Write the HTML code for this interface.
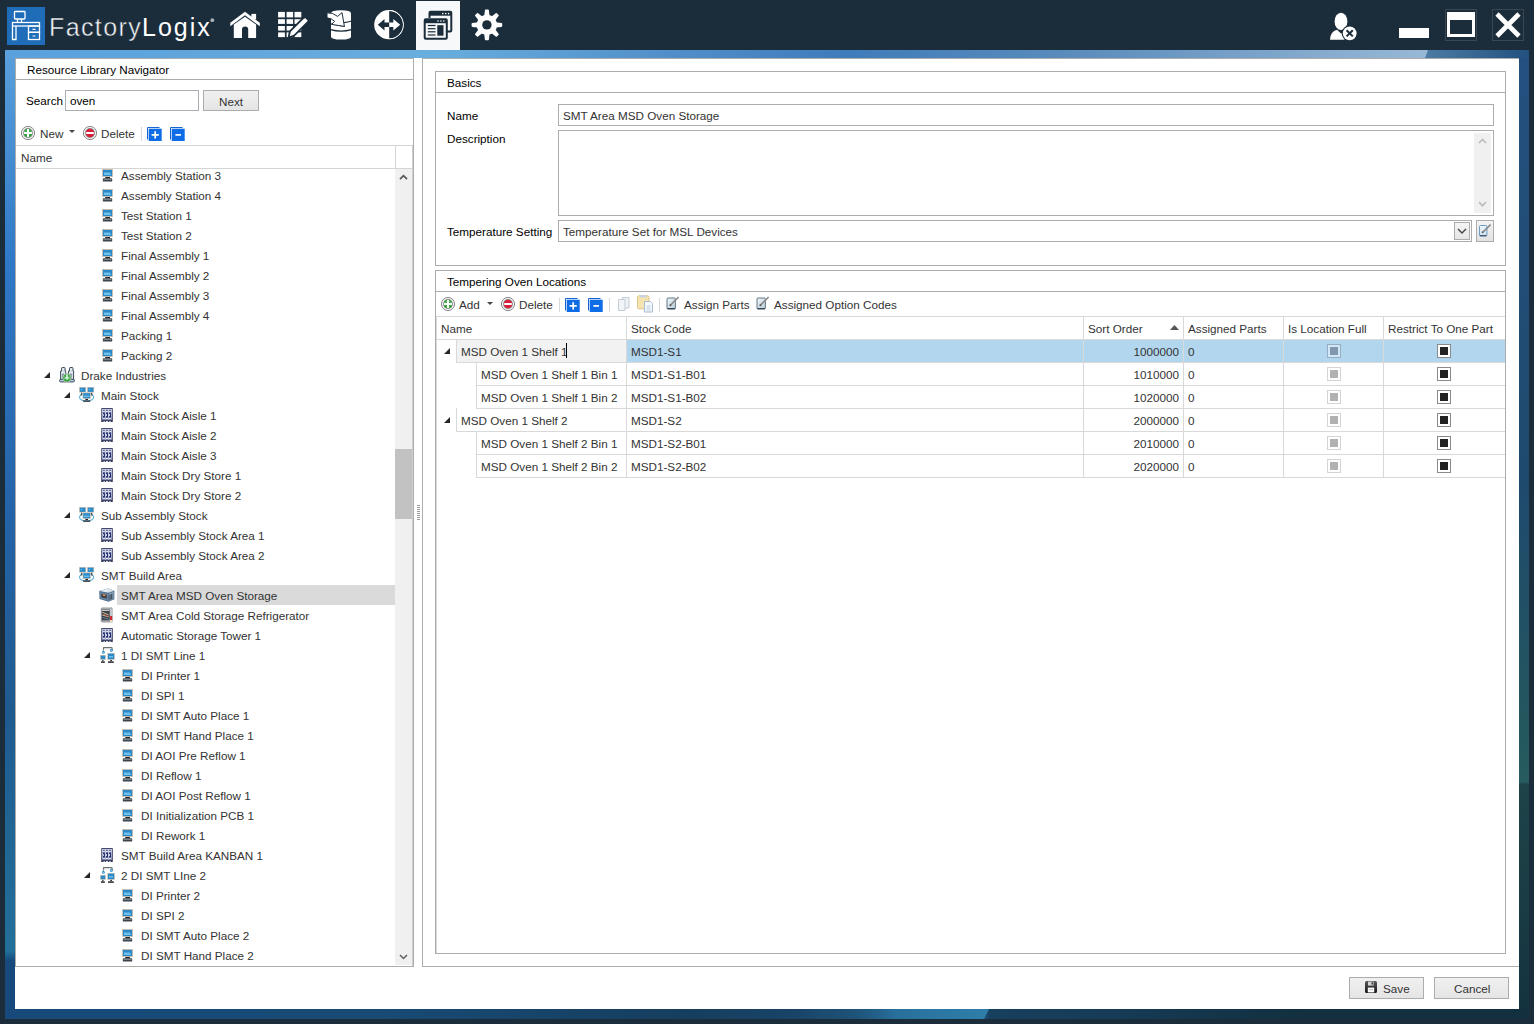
<!DOCTYPE html><html><head><meta charset="utf-8"><style>
*{margin:0;padding:0;box-sizing:border-box}
html,body{width:1534px;height:1024px;overflow:hidden;background:#1b2d3b;font-family:"Liberation Sans",sans-serif;font-size:12px}
.t{position:absolute;white-space:nowrap;line-height:20px;height:20px;font-size:11.7px}
.a{position:absolute}
svg{position:absolute;overflow:visible}
</style></head><body>
<svg width="0" height="0" style="position:absolute;left:0;top:0"><defs>
<symbol id="comp" viewBox="0 0 16 16">
 <rect x="3.2" y="2" width="10.6" height="8" fill="#d6cec4"/>
 <rect x="3.7" y="2.5" width="9.6" height="7" fill="none" stroke="#b8afa5" stroke-width=".6"/>
 <rect x="4" y="3" width="9" height="6" fill="#2a8ac8"/>
 <path d="M5 5.5h6l1 2.5H5z" fill="#6fc0ea"/>
 <rect x="6.3" y="10" width="4.7" height="1.3" fill="#1e262c"/>
 <path d="M4.5 11.2h8q.7 0 .7.7v2q0 .7-.7.7h-8q-.7 0-.7-.7v-2q0-.7.7-.7z" fill="#3e454c"/>
 <rect x="4.5" y="12.2" width="8" height=".8" fill="#8c939a"/>
</symbol>
<symbol id="rack" viewBox="0 0 16 16">
 <defs><linearGradient id="rg" x1="0" y1="0" x2="0" y2="1"><stop offset="0" stop-color="#c6cae2"/><stop offset="1" stop-color="#8c92ba"/></linearGradient></defs>
 <rect x="2.2" y="1.1" width="11.6" height="13.9" rx=".6" fill="#363c5e"/>
 <rect x="2.9" y="1.9" width="10.1" height="10.9" fill="url(#rg)"/>
 <path d="M6.4 2v10.8M9.5 2v10.8" stroke="#dcdfee" stroke-width=".5"/>
 <path d="M4 3.4h1.8M7.1 3.4h1.8M10.1 3.4h1.8" stroke="#3c4680" stroke-width=".9"/>
 <path d="M4 4.4h1.8M7.1 4.4h1.8M10.1 4.4h1.8" stroke="#f4f4f8" stroke-width=".7"/>
 <rect x="4" y="5.4" width="1.9" height="5.1" fill="#22306c"/><rect x="7.1" y="5.4" width="1.9" height="5.1" fill="#22306c"/><rect x="10.1" y="5.4" width="1.9" height="5.1" fill="#22306c"/>
 <rect x="3.9" y="7.2" width=".9" height="1.7" fill="#fff"/><rect x="7" y="7.2" width=".9" height="1.7" fill="#fff"/><rect x="10" y="7.2" width=".9" height="1.7" fill="#fff"/>
 <path d="M4 11.5h1.8M7.1 11.5h1.8M10.1 11.5h1.8" stroke="#f4f4f8" stroke-width=".9"/>
 <rect x="4.6" y="13.9" width="1.1" height="1.2" fill="#fff"/><rect x="7.2" y="13.9" width="1.6" height="1.2" fill="#fff"/><rect x="10.4" y="13.9" width="1.1" height="1.2" fill="#fff"/>
</symbol>
<symbol id="net" viewBox="0 0 16 16">
 <ellipse cx="7.6" cy="10.2" rx="7.1" ry="3.9" fill="none" stroke="#5ab2de" stroke-width="1.1"/>
 <rect x="0.1" y="0" width="7" height="5.7" fill="#cdc5bc"/>
 <rect x="0.8" y="0.7" width="5.6" height="4.2" fill="#2a8ac8"/>
 <rect x="8.1" y="0" width="7" height="5.7" fill="#cdc5bc"/>
 <rect x="8.8" y="0.7" width="5.6" height="4.2" fill="#2a8ac8"/>
 <rect x="1.8" y="2.2" width="1.4" height="1" fill="#7cc4ea"/><rect x="9.8" y="2.2" width="1.4" height="1" fill="#7cc4ea"/>
 <rect x="2.2" y="5.8" width="1" height="1.2" fill="#222"/><rect x="12.2" y="5.8" width="1" height="1.2" fill="#222"/>
 <rect x="1.6" y="7.4" width="1.8" height="1" fill="#333"/><rect x="12" y="7.4" width="1.8" height="1" fill="#333"/>
 <rect x="3.6" y="5.5" width="8.2" height="6.4" fill="#cdc5bc"/>
 <rect x="4.3" y="6.2" width="6.8" height="4.9" fill="#2a8ac8"/>
 <rect x="5" y="8.6" width="5.4" height="1.3" fill="#7cc4ea"/>
 <rect x="6.4" y="11.9" width="2.6" height="1.2" fill="#222"/>
 <rect x="4.2" y="13.4" width="7" height="1.4" fill="#333"/>
</symbol>
<symbol id="factory" viewBox="0 0 16 16">
 <path d="M2.6 4V1.2q0-.7.7-.7h2.1q.7 0 .7.7V4h.6v9H1.6V4z" fill="#d4dee6" stroke="#3a4c5c" stroke-width="1"/>
 <path d="M10.5 4V1.2q0-.7.7-.7h2.1q.7 0 .7.7V4h.6v9H9.5V4z" fill="#d4dee6" stroke="#3a4c5c" stroke-width="1"/>
 <rect x="3.2" y="1.8" width="1.8" height=".9" fill="#fff"/><rect x="11.1" y="1.8" width="1.8" height=".9" fill="#fff"/>
 <rect x="2.4" y="5.2" width="3.4" height="1" fill="#f4f6f8"/><rect x="10.3" y="5.2" width="3.4" height="1" fill="#f4f6f8"/>
 <rect x="3" y="6.5" width="2" height="6" fill="#8a9cac"/><rect x="10.9" y="6.5" width="2" height="6" fill="#8a9cac"/>
 <rect x="0.5" y="12.4" width="15" height="2.5" rx="1.2" fill="#b4cce0" stroke="#3a4c5c" stroke-width="1"/>
 <circle cx="8" cy="10.9" r="4.2" fill="#29a632" stroke="#c4c4c4" stroke-width="1"/>
 <path d="M8 7.6v5.2" stroke="#fff" stroke-width="1.5"/>
 <path d="M5.4 9.6l1.3 1.3-1.3 1.3M10.6 9.6l-1.3 1.3 1.3 1.3" stroke="#fff" stroke-width="1" fill="none"/>
</symbol>
<symbol id="oven" viewBox="0 0 16 16">
 <path d="M0.2 4L9 1.6 15.4 3.7V12.2L9.6 14.8 0.5 12z" fill="#4d6d90"/>
 <path d="M0.2 4L9 1.6 15.4 3.7 9.5 5.7z" fill="#d2dce6"/>
 <path d="M2.5 3.6L8.8 2.2 12.5 3.4 6.5 4.9z" fill="#e8eef4"/>
 <path d="M1 5.2l8 1.4v7.2L1 11.4z" fill="#6c84a0"/>
 <path d="M2.3 6.8l5.5 1v3.8l-5.5-1z" fill="#39414c"/>
 <path d="M3.8 7.3l2.6.5v1.5l-2.6-.5z" fill="#f08c3c"/>
 <path d="M9.8 6.6l4.8-1.8v7.2L9.8 14z" fill="#8ea4ba"/>
 <path d="M11 7.5v5.5M12.8 6.8v5.5" stroke="#223244" stroke-width="1"/>
</symbol>
<symbol id="fridge" viewBox="0 0 16 16">
 <path d="M1.8 1.3L4 0h8.2l1.4 1.3V15.5H2.8L1.8 14.5z" fill="#9ea2a8"/>
 <path d="M4 0h8.2l1.4 1.3H3z" fill="#c8ccd0"/>
 <path d="M2.8 2.6h7.8v10.6H2.8z" fill="#3c4046"/>
 <path d="M3.2 5.2l6.5 2.6M3.2 8l6.5 1.8" stroke="#d8d4a0" stroke-width=".9"/>
 <path d="M3.5 10.5l6 1.5" stroke="#6a8ab0" stroke-width=".9"/>
 <path d="M4 6.8l5 2.5" stroke="#c84848" stroke-width=".8"/>
 <path d="M3 3.4h7.4" stroke="#eaeaea" stroke-width=".9"/>
 <rect x="11" y="2" width="2.2" height="11" fill="#c4c8cc"/>
 <rect x="11" y="9" width="2.2" height="4" fill="#c83030"/>
 <rect x="11" y="13" width="2.2" height="2.5" fill="#e8dac4"/>
</symbol>
<symbol id="line" viewBox="0 0 16 16">
 <path d="M4.4 5V1.2q0-.6.6-.6h7.5q.6 0 .6.6v2.5" fill="none" stroke="#6e6e6e" stroke-width="1.1"/>
 <path d="M4.9 5V2.2h7.2" fill="none" stroke="#ddd" stroke-width=".6"/>
 <circle cx="4.4" cy="5.4" r="1.4" fill="#2a8fd0"/><circle cx="4.4" cy="5.4" r=".5" fill="#cfe8f8"/>
 <circle cx="12.4" cy="3.5" r="1.4" fill="#2a8fd0"/><circle cx="12.4" cy="3.5" r=".5" fill="#cfe8f8"/>
 <rect x="1.1" y="8" width="5.7" height="4.8" fill="#c9c0b6"/>
 <rect x="1.8" y="8.7" width="4.3" height="3.4" fill="#2a8ac8"/>
 <rect x="8.3" y="6" width="7.5" height="6.8" fill="#c9c0b6"/>
 <rect x="9" y="6.7" width="6.1" height="5.4" fill="#2a8ac8"/>
 <rect x="10" y="9" width="4" height="1.5" fill="#6fc0ea"/>
 <rect x="3.3" y="12.9" width="1.2" height="1.2" fill="#222"/>
 <rect x="2" y="14.3" width="3.8" height="1.6" fill="#333"/>
 <rect x="11.3" y="12.9" width="1.6" height="1.2" fill="#222"/>
 <rect x="9" y="14.3" width="5.8" height="1.6" fill="#333"/>
</symbol>
<symbol id="exp" viewBox="0 0 6 6"><path d="M6 0V6H0z" fill="#262626"/></symbol>
<symbol id="addi" viewBox="0 0 14 14">
 <circle cx="7" cy="7" r="6.6" fill="#f2f2f2" stroke="#888" stroke-width="1"/>
 <circle cx="7" cy="7" r="4.9" fill="#8e8e8e"/>
 <circle cx="7" cy="7" r="4.2" fill="#2da33a"/>
 <path d="M3 5.5Q7 3 11 5.5" stroke="#7fd088" stroke-width="1" fill="none" opacity=".6"/>
 <path d="M7 2.9v8.2M2.9 7h8.2" stroke="#fff" stroke-width="2"/>
</symbol>
<symbol id="deli" viewBox="0 0 14 14">
 <circle cx="7" cy="7" r="6.6" fill="#f2f2f2" stroke="#888" stroke-width="1"/>
 <circle cx="7" cy="7" r="4.9" fill="#8e8e8e"/>
 <circle cx="7" cy="7" r="4.2" fill="#d9203a"/>
 <path d="M3.2 7h7.6" stroke="#fff" stroke-width="2"/>
</symbol>
<symbol id="expall" viewBox="0 0 15 14">
 <path d="M0.5 12.5V0.5H12.5" fill="none" stroke="#1565d0" stroke-width="1"/>
 <rect x="1.7" y="1.7" width="13" height="12.3" fill="#0e6ce6"/>
 <path d="M8.2 4.3v7.2M4.6 7.9h7.2" stroke="#fff" stroke-width="1.7"/>
</symbol>
<symbol id="colall" viewBox="0 0 15 14">
 <path d="M0.5 12.5V0.5H12.5" fill="none" stroke="#1565d0" stroke-width="1"/>
 <rect x="1.7" y="1.7" width="13" height="12.3" fill="#0e6ce6"/>
 <path d="M5.4 7.9h5.6" stroke="#fff" stroke-width="1.7"/>
</symbol>
<symbol id="copyi" viewBox="0 0 14 14">
 <path d="M5.5 0.5h6.5v10.5H5.5z" fill="#eef2f6" stroke="#c4ccd6"/>
 <path d="M1.5 2.5h6.5v11H1.5z" fill="#f2f5f8" stroke="#c4ccd6"/>
</symbol>
<symbol id="pastei" viewBox="0 0 18 18">
 <rect x="0.5" y="0.8" width="11.5" height="13" rx="1.5" fill="#f6e4b0" stroke="#dcc48a"/>
 <rect x="3" y="0" width="6.5" height="2.5" rx=".8" fill="#c8d4e0"/>
 <path d="M7.5 6.5h6l2 2v8.5h-8z" fill="#f4f8fc" stroke="#a8bcd4"/>
 <path d="M9.5 11h4M9.5 13h4M9.5 15h4" stroke="#b4c4d8" stroke-width=".8"/>
</symbol>
<symbol id="editi" viewBox="0 0 14 14">
 <defs><linearGradient id="eg" x1="0" y1="0" x2="1" y2="1"><stop offset="0" stop-color="#f0f6fa"/><stop offset="1" stop-color="#b8ccd8"/></linearGradient></defs>
 <rect x="1" y="2" width="8.4" height="11" rx="1" fill="url(#eg)" stroke="#607888" stroke-width="1"/>
 <path d="M1.5 12.6h7.4" stroke="#3a4650" stroke-width="1.2"/>
 <path d="M4.2 9.4L12.6 1" stroke="#8c8c8c" stroke-width="1.6"/>
 <circle cx="4.4" cy="9.2" r="1" fill="#5a5a5a"/>
</symbol>
</defs></svg>
<div class="a" style="left:5px;top:50px;width:1524px;height:969px;background:linear-gradient(180deg,#5aa0dc 0%,#2f78c6 22%,#2563a8 48%,#1f5a8f 68%,#22709a 93%,#174a7a 94%,#174a7a 100%)"></div>
<div class="a" style="left:5px;top:50px;width:1524px;height:8px;background:linear-gradient(90deg,#5aa0dc 0%,#68aede 28%,#4f8cc8 45%,#3f7cba 55%,#5a8cbc 70%,#98b8d6 93.4%,#98b8d6 94%,#22507f 100%)"></div>
<svg style="left:0;top:0" width="1534" height="60" viewBox="0 0 1534 60"><defs><linearGradient id="trg" x1="0" y1="0" x2="1" y2="0"><stop offset="0" stop-color="#4c7ca4"/><stop offset="1" stop-color="#22507f"/></linearGradient></defs><polygon points="1428,50 1529,50 1529,58 1425,58" fill="url(#trg)"/></svg>
<div class="a" style="left:1519px;top:58px;width:10px;height:961px;background:linear-gradient(180deg,#23507f 0%,#1f4a6e 45%,#23565e 68%,#265c60 75.3%,#1e4349 75.6%,#1a3c44 88%,#13323f 100%)"></div>
<div class="a" style="left:5px;top:1009px;width:1524px;height:10px;background:linear-gradient(90deg,#174a7a 0%,#184a74 25%,#163e5e 45%,#194468 52%,#1c4c70 53.5%,#1c4c70 64.4%,#17405e 64.6%,#163c58 72%,#12303f 85%,#12303f 100%)"></div>
<svg style="left:0;top:0" width="1534" height="1024" viewBox="0 0 1534 1024"><defs><linearGradient id="bsg" x1="0" y1="0" x2="1" y2="0"><stop offset="0" stop-color="#1c4c70" stop-opacity="0"/><stop offset=".45" stop-color="#28709c"/><stop offset="1" stop-color="#2f7eaa"/></linearGradient></defs><polygon points="820,1009 989,1009 984,1019 820,1019" fill="url(#bsg)"/></svg>
<div class="a" style="left:15px;top:58px;width:1504px;height:951px;background:#fff"></div>
<div class="a" style="left:7px;top:7px;width:38px;height:38px;background:#1f6cb8"></div>
<svg style="left:7px;top:7px" width="38" height="38" viewBox="0 0 38 38" fill="none" stroke="#fff" stroke-width="1.3">
<rect x="7.5" y="4.5" width="10.5" height="7.5" rx=".8"/><path d="M10.5 12v3.5M14.5 12v3.5"/>
<rect x="5.5" y="15.5" width="27" height="3.5"/>
<path d="M5.5 19V32.5H9V19"/><rect x="21.5" y="19" width="11" height="6.3"/><rect x="21.5" y="25.3" width="11" height="7.2"/>
<path d="M25.5 22.3h3M25.5 29h3" stroke-width="1.2"/></svg>
<div class="a" style="left:49px;top:10px;line-height:34px;font-size:25px;color:#f4f6f8;letter-spacing:1.4px;white-space:nowrap;-webkit-text-stroke:0.45px #1b2d3b">Factory</div>
<div class="a" style="left:142px;top:10px;line-height:34px;font-size:25px;color:#fff;letter-spacing:2px;white-space:nowrap">Logix</div>
<svg style="left:210px;top:18px" width="5" height="5" viewBox="0 0 5 5"><circle cx="2.3" cy="2.2" r="1.9" fill="#aab4bc"/></svg>
<svg style="left:0;top:0" width="520" height="50" viewBox="0 0 520 50">
<g fill="#fff">
<path d="M230.3 22.7L245 11.8 259.8 22.7 259.8 26.2 245 15.3 230.3 26.2z"/>
<rect x="251.4" y="13.9" width="4.7" height="5.5"/>
<path d="M233.8 24.5L245 16.8 256.1 24.5V38H248.2V29.5Q248.2 26.5 245.1 26.5Q242 26.5 242 29.5V38H233.8z"/>
<rect x="278.1" y="11.9" width="6.8" height="5.5"/><rect x="286.6" y="11.9" width="6.5" height="5.5"/><rect x="294.5" y="11.9" width="6.8" height="5.5"/>
<rect x="278.1" y="19.2" width="6.8" height="4.7"/><rect x="286.6" y="19.2" width="6.5" height="4.7"/><rect x="294.5" y="19.2" width="6.8" height="4.7"/>
<rect x="278.1" y="26" width="6.8" height="4.6"/><rect x="286.6" y="26" width="6.5" height="4.6"/><rect x="294.5" y="26" width="6.8" height="4.6"/>
<rect x="278.1" y="32.4" width="6.8" height="4.7"/><rect x="286.6" y="32.4" width="6.5" height="4.7"/><rect x="294.5" y="32.4" width="6.8" height="4.7"/>
</g>
<path d="M287.5 38.5L289 31 304.5 15.5 310 21 294.5 36.5z" fill="#1b2d3b"/>
<path d="M289.8 36.2L290.8 31.8 304.8 17.8 307.8 20.8 293.8 34.8z" fill="#fff"/>
<path d="M303.5 19.1L305.3 17.3" stroke="#1b2d3b" stroke-width="0.8"/>
<path d="M331 13.2Q331 10.2 341 10.2Q351 10.2 351 13.2V36.8Q351 39.6 341 39.6Q331 39.6 331 36.8z" fill="#fff"/>
<path d="M344 22.6Q348 22.2 351.5 20.9" stroke="#1b2d3b" stroke-width="1.1" fill="none"/>
<path d="M330.5 29.6Q341 32.6 351.5 29.6" stroke="#1b2d3b" stroke-width="1.2" fill="none"/>
<path d="M330.5 23.8L344.6 26.4" stroke="#1b2d3b" stroke-width="1.1" fill="none"/>
<path d="M327 12.8Q333 12.4 337.6 16.4L342 12.6 344.4 26.4 331.6 24.4 334.6 21.3Q331.5 18.2 327 17.8z" fill="#fff" stroke="#1b2d3b" stroke-width="1"/>
<circle cx="388.8" cy="24.7" r="14.6" fill="#fff"/>
<path d="M389.2 10.9A13.8 13.8 0 0 1 389.2 38.5z" fill="#1b2d3b"/>
<path d="M389.2 10.1A14.6 14.6 0 0 1 389.2 39.3V38.5A13.8 13.8 0 0 0 389.2 10.9z" fill="#fff"/>
<path d="M377.8 24.8L384.5 19V22.6H389.2V27H384.5V30.6z" fill="#1b2d3b"/>
<path d="M400.2 24.8L393.3 19V22.6H389.2V27H393.3V30.6z" fill="#fff"/>
<rect x="416" y="1" width="44" height="49" fill="#f7f8fa"/>
<g fill="none" stroke="#1b2d3b" stroke-width="2">
<path d="M429.5 18V12.8Q429.5 11.8 430.5 11.8H450.3Q451.3 11.8 451.3 12.8V30.5Q451.3 31.5 450.3 31.5H447"/>
<path d="M424.7 20.3Q424.7 19.3 425.7 19.3H445.8Q446.8 19.3 446.8 20.3V37.8Q446.8 38.8 445.8 38.8H425.7Q424.7 38.8 424.7 37.8z"/>
</g>
<rect x="429.5" y="11.8" width="21.8" height="3.9" fill="#1b2d3b"/>
<rect x="424.7" y="19.3" width="22.1" height="3.9" fill="#1b2d3b"/>
<g fill="#fff"><circle cx="442.8" cy="13.6" r=".8"/><circle cx="445.7" cy="13.6" r=".8"/><circle cx="448.6" cy="13.6" r=".8"/>
<circle cx="438" cy="21" r=".8"/><circle cx="440.9" cy="21" r=".8"/><circle cx="443.8" cy="21" r=".8"/></g>
<g fill="#1b2d3b"><rect x="427.8" y="24.9" width="7.7" height="1.2"/><rect x="427.8" y="28.1" width="7.7" height="1.2"/><rect x="427.8" y="31.2" width="7.7" height="1.2"/><rect x="427.8" y="34.4" width="7.7" height="1.2"/>
<rect x="437.3" y="25.2" width="6.2" height="10.5"/></g>
<g fill="#fff">
<circle cx="486.9" cy="24.9" r="10.2"/>
<g id="gt"><path d="M484.9 10.4Q484.9 9.6 485.7 9.6H488.1Q488.9 9.6 488.9 10.4L489.6 16H484.2z"/></g>
<use href="#gt" transform="rotate(45 486.9 24.9)"/><use href="#gt" transform="rotate(90 486.9 24.9)"/><use href="#gt" transform="rotate(135 486.9 24.9)"/>
<use href="#gt" transform="rotate(180 486.9 24.9)"/><use href="#gt" transform="rotate(225 486.9 24.9)"/><use href="#gt" transform="rotate(270 486.9 24.9)"/><use href="#gt" transform="rotate(315 486.9 24.9)"/>
</g>
<circle cx="486.9" cy="24.9" r="4.7" fill="#1b2d3b"/>
</svg>
<svg style="left:0;top:0" width="1534" height="50" viewBox="0 0 1534 50">
<ellipse cx="1341" cy="21.4" rx="6.4" ry="8.7" fill="#fff"/>
<path d="M1330 39.8Q1330.3 31.5 1337 29.8L1341 33.5 1344.5 32V39.8z" fill="#fff"/>
<circle cx="1349.7" cy="33.3" r="8" fill="#1b2d3b"/><circle cx="1349.7" cy="33.3" r="6.9" fill="#fff"/>
<path d="M1346.6 30.2l6.2 6.2M1352.8 30.2l-6.2 6.2" stroke="#1b2d3b" stroke-width="2"/></svg>
<div class="a" style="left:1399px;top:28px;width:30px;height:10px;background:#fff"></div>
<div class="a" style="left:1445px;top:9px;width:32px;height:32px;border:1px solid #3b4852"></div>
<div class="a" style="left:1447px;top:12px;width:28px;height:25px;border:3px solid #fff;border-top-width:8px"></div>
<div class="a" style="left:1492px;top:9px;width:32px;height:32px;border:1px solid #3b4852"></div>
<svg style="left:1495px;top:13px" width="26" height="24" viewBox="0 0 26 24"><path d="M2 1l22 22M24 1L2 23" stroke="#fff" stroke-width="4.6"/></svg>
<div class="a" style="left:15px;top:58px;width:399px;height:909px;border:1px solid #acacac;background:#fff"></div>
<div class="a" style="left:15px;top:79px;width:399px;height:1px;background:#ababab"></div>
<div class="t" style="left:27px;top:60px;color:#000;">Resource Library Navigator</div>
<div class="t" style="left:26px;top:91px;color:#000;">Search</div>
<div class="a" style="left:65px;top:90px;width:134px;height:21px;border:1px solid #abadb3;background:#fff"></div>
<div class="t" style="left:70px;top:91px;color:#000;">oven</div>
<div class="a" style="left:203px;top:90px;width:56px;height:21px;border:1px solid #acacac;background:linear-gradient(#f0f0f0,#e5e5e5)"></div>
<div class="t" style="left:219px;top:92px;color:#333;">Next</div>
<svg style="left:21px;top:126px" width="14" height="14" viewBox="0 0 14 14"><use href="#addi"/></svg>
<div class="t" style="left:40px;top:124px;color:#333;">New</div>
<svg style="left:69px;top:130px" width="6" height="4" viewBox="0 0 6 4"><path d="M0 0h6L3 3z" fill="#444"/></svg>
<svg style="left:83px;top:126px" width="14" height="14" viewBox="0 0 14 14"><use href="#deli"/></svg>
<div class="t" style="left:101px;top:124px;color:#333;">Delete</div>
<div class="a" style="left:141px;top:127px;width:1px;height:14px;background:#d8d8d8"></div>
<svg style="left:147px;top:127px" width="15" height="14" viewBox="0 0 15 14"><use href="#expall"/></svg>
<svg style="left:170px;top:127px" width="15" height="14" viewBox="0 0 15 14"><use href="#colall"/></svg>
<div class="a" style="left:16px;top:145px;width:397px;height:1px;background:#d5d5d5"></div>
<div class="a" style="left:16px;top:168px;width:397px;height:1px;background:#d5d5d5"></div>
<div class="a" style="left:395px;top:145px;width:1px;height:23px;background:#d5d5d5"></div>
<div class="t" style="left:21px;top:148px;color:#333;">Name</div>
<div class="a" style="left:395px;top:169px;width:17px;height:796px;background:#f0f0f0"></div>
<div class="a" style="left:412px;top:145px;width:1px;height:821px;background:#d0d0d0"></div>
<div class="a" style="left:395px;top:449px;width:17px;height:70px;background:#c2c2c2"></div>
<svg style="left:399px;top:174px" width="9" height="6" viewBox="0 0 9 6"><path d="M1 5.2l3.5-3.5L8 5.2" fill="none" stroke="#5a5a5a" stroke-width="1.8"/></svg>
<svg style="left:399px;top:954px" width="9" height="6" viewBox="0 0 9 6"><path d="M1 1l3.5 3.5L8 1" fill="none" stroke="#606060" stroke-width="1.5"/></svg>
<div class="a" style="left:417px;top:505px;width:3px;height:1px;background:#9a9a9a"></div>
<div class="a" style="left:417px;top:507px;width:3px;height:1px;background:#9a9a9a"></div>
<div class="a" style="left:417px;top:509px;width:3px;height:1px;background:#9a9a9a"></div>
<div class="a" style="left:417px;top:511px;width:3px;height:1px;background:#9a9a9a"></div>
<div class="a" style="left:417px;top:513px;width:3px;height:1px;background:#9a9a9a"></div>
<div class="a" style="left:417px;top:515px;width:3px;height:1px;background:#9a9a9a"></div>
<div class="a" style="left:417px;top:517px;width:3px;height:1px;background:#9a9a9a"></div>
<div class="a" style="left:417px;top:519px;width:3px;height:1px;background:#9a9a9a"></div>
<div class="a" style="left:117px;top:585px;width:278px;height:20px;background:#dadada"></div>
<svg style="left:99px;top:167px" width="16" height="16" viewBox="0 0 16 16"><use href="#comp"/></svg>
<div class="t" style="left:121px;top:166px;color:#333;">Assembly Station 3</div>
<svg style="left:99px;top:187px" width="16" height="16" viewBox="0 0 16 16"><use href="#comp"/></svg>
<div class="t" style="left:121px;top:186px;color:#333;">Assembly Station 4</div>
<svg style="left:99px;top:207px" width="16" height="16" viewBox="0 0 16 16"><use href="#comp"/></svg>
<div class="t" style="left:121px;top:206px;color:#333;">Test Station 1</div>
<svg style="left:99px;top:227px" width="16" height="16" viewBox="0 0 16 16"><use href="#comp"/></svg>
<div class="t" style="left:121px;top:226px;color:#333;">Test Station 2</div>
<svg style="left:99px;top:247px" width="16" height="16" viewBox="0 0 16 16"><use href="#comp"/></svg>
<div class="t" style="left:121px;top:246px;color:#333;">Final Assembly 1</div>
<svg style="left:99px;top:267px" width="16" height="16" viewBox="0 0 16 16"><use href="#comp"/></svg>
<div class="t" style="left:121px;top:266px;color:#333;">Final Assembly 2</div>
<svg style="left:99px;top:287px" width="16" height="16" viewBox="0 0 16 16"><use href="#comp"/></svg>
<div class="t" style="left:121px;top:286px;color:#333;">Final Assembly 3</div>
<svg style="left:99px;top:307px" width="16" height="16" viewBox="0 0 16 16"><use href="#comp"/></svg>
<div class="t" style="left:121px;top:306px;color:#333;">Final Assembly 4</div>
<svg style="left:99px;top:327px" width="16" height="16" viewBox="0 0 16 16"><use href="#comp"/></svg>
<div class="t" style="left:121px;top:326px;color:#333;">Packing 1</div>
<svg style="left:99px;top:347px" width="16" height="16" viewBox="0 0 16 16"><use href="#comp"/></svg>
<div class="t" style="left:121px;top:346px;color:#333;">Packing 2</div>
<svg style="left:44px;top:372px" width="6" height="6" viewBox="0 0 6 6"><use href="#exp"/></svg>
<svg style="left:59px;top:367px" width="16" height="16" viewBox="0 0 16 16"><use href="#factory"/></svg>
<div class="t" style="left:81px;top:366px;color:#333;">Drake Industries</div>
<svg style="left:64px;top:392px" width="6" height="6" viewBox="0 0 6 6"><use href="#exp"/></svg>
<svg style="left:79px;top:387px" width="16" height="16" viewBox="0 0 16 16"><use href="#net"/></svg>
<div class="t" style="left:101px;top:386px;color:#333;">Main Stock</div>
<svg style="left:99px;top:407px" width="16" height="16" viewBox="0 0 16 16"><use href="#rack"/></svg>
<div class="t" style="left:121px;top:406px;color:#333;">Main Stock Aisle 1</div>
<svg style="left:99px;top:427px" width="16" height="16" viewBox="0 0 16 16"><use href="#rack"/></svg>
<div class="t" style="left:121px;top:426px;color:#333;">Main Stock Aisle 2</div>
<svg style="left:99px;top:447px" width="16" height="16" viewBox="0 0 16 16"><use href="#rack"/></svg>
<div class="t" style="left:121px;top:446px;color:#333;">Main Stock Aisle 3</div>
<svg style="left:99px;top:467px" width="16" height="16" viewBox="0 0 16 16"><use href="#rack"/></svg>
<div class="t" style="left:121px;top:466px;color:#333;">Main Stock Dry Store 1</div>
<svg style="left:99px;top:487px" width="16" height="16" viewBox="0 0 16 16"><use href="#rack"/></svg>
<div class="t" style="left:121px;top:486px;color:#333;">Main Stock Dry Store 2</div>
<svg style="left:64px;top:512px" width="6" height="6" viewBox="0 0 6 6"><use href="#exp"/></svg>
<svg style="left:79px;top:507px" width="16" height="16" viewBox="0 0 16 16"><use href="#net"/></svg>
<div class="t" style="left:101px;top:506px;color:#333;">Sub Assembly Stock</div>
<svg style="left:99px;top:527px" width="16" height="16" viewBox="0 0 16 16"><use href="#rack"/></svg>
<div class="t" style="left:121px;top:526px;color:#333;">Sub Assembly Stock Area 1</div>
<svg style="left:99px;top:547px" width="16" height="16" viewBox="0 0 16 16"><use href="#rack"/></svg>
<div class="t" style="left:121px;top:546px;color:#333;">Sub Assembly Stock Area 2</div>
<svg style="left:64px;top:572px" width="6" height="6" viewBox="0 0 6 6"><use href="#exp"/></svg>
<svg style="left:79px;top:567px" width="16" height="16" viewBox="0 0 16 16"><use href="#net"/></svg>
<div class="t" style="left:101px;top:566px;color:#333;">SMT Build Area</div>
<svg style="left:99px;top:587px" width="16" height="16" viewBox="0 0 16 16"><use href="#oven"/></svg>
<div class="t" style="left:121px;top:586px;color:#333;">SMT Area MSD Oven Storage</div>
<svg style="left:99px;top:607px" width="16" height="16" viewBox="0 0 16 16"><use href="#fridge"/></svg>
<div class="t" style="left:121px;top:606px;color:#333;">SMT Area Cold Storage Refrigerator</div>
<svg style="left:99px;top:627px" width="16" height="16" viewBox="0 0 16 16"><use href="#rack"/></svg>
<div class="t" style="left:121px;top:626px;color:#333;">Automatic Storage Tower 1</div>
<svg style="left:84px;top:652px" width="6" height="6" viewBox="0 0 6 6"><use href="#exp"/></svg>
<svg style="left:99px;top:647px" width="16" height="16" viewBox="0 0 16 16"><use href="#line"/></svg>
<div class="t" style="left:121px;top:646px;color:#333;">1 DI SMT Line 1</div>
<svg style="left:119px;top:667px" width="16" height="16" viewBox="0 0 16 16"><use href="#comp"/></svg>
<div class="t" style="left:141px;top:666px;color:#333;">DI Printer 1</div>
<svg style="left:119px;top:687px" width="16" height="16" viewBox="0 0 16 16"><use href="#comp"/></svg>
<div class="t" style="left:141px;top:686px;color:#333;">DI SPI 1</div>
<svg style="left:119px;top:707px" width="16" height="16" viewBox="0 0 16 16"><use href="#comp"/></svg>
<div class="t" style="left:141px;top:706px;color:#333;">DI SMT Auto Place 1</div>
<svg style="left:119px;top:727px" width="16" height="16" viewBox="0 0 16 16"><use href="#comp"/></svg>
<div class="t" style="left:141px;top:726px;color:#333;">DI SMT Hand Place 1</div>
<svg style="left:119px;top:747px" width="16" height="16" viewBox="0 0 16 16"><use href="#comp"/></svg>
<div class="t" style="left:141px;top:746px;color:#333;">DI AOI Pre Reflow 1</div>
<svg style="left:119px;top:767px" width="16" height="16" viewBox="0 0 16 16"><use href="#comp"/></svg>
<div class="t" style="left:141px;top:766px;color:#333;">DI Reflow 1</div>
<svg style="left:119px;top:787px" width="16" height="16" viewBox="0 0 16 16"><use href="#comp"/></svg>
<div class="t" style="left:141px;top:786px;color:#333;">DI AOI Post Reflow 1</div>
<svg style="left:119px;top:807px" width="16" height="16" viewBox="0 0 16 16"><use href="#comp"/></svg>
<div class="t" style="left:141px;top:806px;color:#333;">DI Initialization PCB 1</div>
<svg style="left:119px;top:827px" width="16" height="16" viewBox="0 0 16 16"><use href="#comp"/></svg>
<div class="t" style="left:141px;top:826px;color:#333;">DI Rework 1</div>
<svg style="left:99px;top:847px" width="16" height="16" viewBox="0 0 16 16"><use href="#rack"/></svg>
<div class="t" style="left:121px;top:846px;color:#333;">SMT Build Area KANBAN 1</div>
<svg style="left:84px;top:872px" width="6" height="6" viewBox="0 0 6 6"><use href="#exp"/></svg>
<svg style="left:99px;top:867px" width="16" height="16" viewBox="0 0 16 16"><use href="#line"/></svg>
<div class="t" style="left:121px;top:866px;color:#333;">2 DI SMT LIne 2</div>
<svg style="left:119px;top:887px" width="16" height="16" viewBox="0 0 16 16"><use href="#comp"/></svg>
<div class="t" style="left:141px;top:886px;color:#333;">DI Printer 2</div>
<svg style="left:119px;top:907px" width="16" height="16" viewBox="0 0 16 16"><use href="#comp"/></svg>
<div class="t" style="left:141px;top:906px;color:#333;">DI SPI 2</div>
<svg style="left:119px;top:927px" width="16" height="16" viewBox="0 0 16 16"><use href="#comp"/></svg>
<div class="t" style="left:141px;top:926px;color:#333;">DI SMT Auto Place 2</div>
<svg style="left:119px;top:947px" width="16" height="16" viewBox="0 0 16 16"><use href="#comp"/></svg>
<div class="t" style="left:141px;top:946px;color:#333;">DI SMT Hand Place 2</div>
<div class="a" style="left:422px;top:58px;width:1097px;height:909px;border-left:1px solid #acacac;border-bottom:1px solid #acacac;border-top:1px solid #acacac"></div>
<div class="a" style="left:435px;top:71px;width:1071px;height:195px;border:1px solid #acacac"></div>
<div class="a" style="left:435px;top:92px;width:1071px;height:1px;background:#ababab"></div>
<div class="t" style="left:447px;top:73px;color:#000;">Basics</div>
<div class="t" style="left:447px;top:106px;color:#000;">Name</div>
<div class="a" style="left:558px;top:104px;width:936px;height:22px;border:1px solid #acacac;background:#fff"></div>
<div class="t" style="left:563px;top:106px;color:#333;">SMT Area MSD Oven Storage</div>
<div class="t" style="left:447px;top:129px;color:#000;">Description</div>
<div class="a" style="left:558px;top:130px;width:936px;height:86px;border:1px solid #acacac;background:#fff"></div>
<div class="a" style="left:1474px;top:133px;width:17px;height:80px;background:#f0f0f0"></div>
<svg style="left:1478px;top:138px" width="9" height="6" viewBox="0 0 9 6"><path d="M1 5l3.5-3.5L8 5" fill="none" stroke="#bdbdbd" stroke-width="1.7"/></svg>
<svg style="left:1478px;top:201px" width="9" height="6" viewBox="0 0 9 6"><path d="M1 1.2l3.5 3.5L8 1.2" fill="none" stroke="#bdbdbd" stroke-width="1.7"/></svg>
<div class="t" style="left:447px;top:222px;color:#000;">Temperature Setting</div>
<div class="a" style="left:558px;top:220px;width:914px;height:22px;border:1px solid #acacac;background:#fff"></div>
<div class="t" style="left:563px;top:222px;color:#333;">Temperature Set for MSL Devices</div>
<div class="a" style="left:1454px;top:222px;width:16px;height:18px;border:1px solid #acacac;background:linear-gradient(#f4f4f4,#e6e6e6)"></div>
<svg style="left:1457px;top:228px" width="10" height="6" viewBox="0 0 10 6"><path d="M1 1l4 4 4-4" fill="none" stroke="#444" stroke-width="1.4"/></svg>
<div class="a" style="left:1476px;top:220px;width:18px;height:22px;border:1px solid #acacac;background:linear-gradient(#f4f4f4,#e2e2e2)"></div>
<svg style="left:0;top:0" width="1534" height="250" viewBox="0 0 1534 250"><defs><linearGradient id="tg" x1="0" y1="0" x2="0" y2="1"><stop offset="0" stop-color="#eef6fc"/><stop offset="1" stop-color="#cfe3f2"/></linearGradient></defs><rect x="1479.5" y="225.5" width="7.4" height="10.6" rx="1" fill="url(#tg)" stroke="#6a9cc4" stroke-width="1"/><path d="M1480 235.6h6.5" stroke="#4a5a68" stroke-width="1.2"/><path d="M1482.4 232.6L1490.6 224.6" stroke="#8a8a8a" stroke-width="1.6"/><circle cx="1482.6" cy="232.3" r="1" fill="#6a6a6a"/></svg>
<div class="a" style="left:435px;top:270px;width:1071px;height:684px;border:1px solid #acacac"></div>
<div class="a" style="left:435px;top:291px;width:1071px;height:1px;background:#ababab"></div>
<div class="t" style="left:447px;top:272px;color:#000;">Tempering Oven Locations</div>
<svg style="left:441px;top:297px" width="14" height="14" viewBox="0 0 14 14"><use href="#addi"/></svg>
<div class="t" style="left:459px;top:295px;color:#333;">Add</div>
<svg style="left:487px;top:302px" width="6" height="4" viewBox="0 0 6 4"><path d="M0 0h6L3 3z" fill="#444"/></svg>
<svg style="left:501px;top:297px" width="14" height="14" viewBox="0 0 14 14"><use href="#deli"/></svg>
<div class="t" style="left:519px;top:295px;color:#333;">Delete</div>
<div class="a" style="left:559px;top:298px;width:1px;height:14px;background:#d8d8d8"></div>
<svg style="left:565px;top:298px" width="15" height="14" viewBox="0 0 15 14"><use href="#expall"/></svg>
<svg style="left:588px;top:298px" width="15" height="14" viewBox="0 0 15 14"><use href="#colall"/></svg>
<div class="a" style="left:609px;top:298px;width:1px;height:14px;background:#d8d8d8"></div>
<svg style="left:617px;top:297px" width="14" height="14" viewBox="0 0 14 14"><use href="#copyi"/></svg>
<svg style="left:637px;top:295px" width="18" height="18" viewBox="0 0 18 18"><use href="#pastei"/></svg>
<div class="a" style="left:659px;top:298px;width:1px;height:14px;background:#d8d8d8"></div>
<svg style="left:666px;top:296px" width="14" height="14" viewBox="0 0 14 14"><use href="#editi"/></svg>
<div class="t" style="left:684px;top:295px;color:#333;">Assign Parts</div>
<svg style="left:756px;top:296px" width="14" height="14" viewBox="0 0 14 14"><use href="#editi"/></svg>
<div class="t" style="left:774px;top:295px;color:#333;">Assigned Option Codes</div>
<div class="a" style="left:436px;top:316px;width:1069px;height:162px;"></div>
<div class="a" style="left:436px;top:316px;width:1069px;height:1px;background:#d9d9d9"></div>
<div class="a" style="left:436px;top:339px;width:1069px;height:1px;background:#d9d9d9"></div>
<div class="a" style="left:627px;top:340px;width:878px;height:22px;background:#b3d6ef"></div>
<div class="a" style="left:456px;top:340px;width:170px;height:22px;background:#f2f2f2"></div>
<div class="a" style="left:626px;top:316px;width:1px;height:162px;background:#d9d9d9"></div>
<div class="a" style="left:1083px;top:316px;width:1px;height:162px;background:#d9d9d9"></div>
<div class="a" style="left:1183px;top:316px;width:1px;height:162px;background:#d9d9d9"></div>
<div class="a" style="left:1283px;top:316px;width:1px;height:162px;background:#d9d9d9"></div>
<div class="a" style="left:1383px;top:316px;width:1px;height:162px;background:#d9d9d9"></div>
<div class="a" style="left:436px;top:316px;width:1px;height:637px;background:#d9d9d9"></div>
<div class="t" style="left:441px;top:319px;color:#333;">Name</div>
<div class="t" style="left:631px;top:319px;color:#333;">Stock Code</div>
<div class="t" style="left:1088px;top:319px;color:#333;">Sort Order</div>
<svg style="left:1170px;top:325px" width="9" height="5" viewBox="0 0 9 5"><path d="M0 5L4.5 0 9 5z" fill="#555"/></svg>
<div class="t" style="left:1188px;top:319px;color:#333;">Assigned Parts</div>
<div class="t" style="left:1288px;top:319px;color:#333;">Is Location Full</div>
<div class="t" style="left:1388px;top:319px;color:#333;">Restrict To One Part</div>
<div class="a" style="left:456px;top:339px;width:1px;height:23px;background:#d9d9d9"></div>
<div class="a" style="left:456px;top:362px;width:1049px;height:1px;background:#d9d9d9"></div>
<svg style="left:444px;top:348px" width="6" height="6" viewBox="0 0 6 6"><use href="#exp"/></svg>
<div class="t" style="left:461px;top:342px;color:#333;">MSD Oven 1 Shelf 1</div>
<div class="t" style="left:631px;top:342px;color:#333;">MSD1-S1</div>
<div class="t" style="left:1083px;width:96px;text-align:right;top:342px;color:#333">1000000</div>
<div class="t" style="left:1188px;top:342px;color:#333;">0</div>
<div class="a" style="left:1327px;top:344px;width:14px;height:14px;border:1px solid #94aec4;background:#d2e6f6"></div>
<div class="a" style="left:1330px;top:347px;width:8px;height:8px;background:#8097ad"></div>
<div class="a" style="left:1437px;top:344px;width:14px;height:14px;border:1px solid #8a8a8a;background:#fff"></div>
<div class="a" style="left:1440px;top:347px;width:8px;height:8px;background:#222"></div>
<div class="a" style="left:476px;top:362px;width:1px;height:23px;background:#d9d9d9"></div>
<div class="a" style="left:476px;top:385px;width:1029px;height:1px;background:#d9d9d9"></div>
<div class="t" style="left:481px;top:365px;color:#333;">MSD Oven 1 Shelf 1 Bin 1</div>
<div class="t" style="left:631px;top:365px;color:#333;">MSD1-S1-B01</div>
<div class="t" style="left:1083px;width:96px;text-align:right;top:365px;color:#333">1010000</div>
<div class="t" style="left:1188px;top:365px;color:#333;">0</div>
<div class="a" style="left:1327px;top:367px;width:14px;height:14px;border:1px solid #d4d4d4;background:#fff"></div>
<div class="a" style="left:1330px;top:370px;width:8px;height:8px;background:#b2b2b2"></div>
<div class="a" style="left:1437px;top:367px;width:14px;height:14px;border:1px solid #8a8a8a;background:#fff"></div>
<div class="a" style="left:1440px;top:370px;width:8px;height:8px;background:#222"></div>
<div class="a" style="left:476px;top:385px;width:1px;height:23px;background:#d9d9d9"></div>
<div class="a" style="left:476px;top:408px;width:1029px;height:1px;background:#d9d9d9"></div>
<div class="t" style="left:481px;top:388px;color:#333;">MSD Oven 1 Shelf 1 Bin 2</div>
<div class="t" style="left:631px;top:388px;color:#333;">MSD1-S1-B02</div>
<div class="t" style="left:1083px;width:96px;text-align:right;top:388px;color:#333">1020000</div>
<div class="t" style="left:1188px;top:388px;color:#333;">0</div>
<div class="a" style="left:1327px;top:390px;width:14px;height:14px;border:1px solid #d4d4d4;background:#fff"></div>
<div class="a" style="left:1330px;top:393px;width:8px;height:8px;background:#b2b2b2"></div>
<div class="a" style="left:1437px;top:390px;width:14px;height:14px;border:1px solid #8a8a8a;background:#fff"></div>
<div class="a" style="left:1440px;top:393px;width:8px;height:8px;background:#222"></div>
<div class="a" style="left:456px;top:408px;width:1px;height:23px;background:#d9d9d9"></div>
<div class="a" style="left:456px;top:431px;width:1049px;height:1px;background:#d9d9d9"></div>
<svg style="left:444px;top:417px" width="6" height="6" viewBox="0 0 6 6"><use href="#exp"/></svg>
<div class="t" style="left:461px;top:411px;color:#333;">MSD Oven 1 Shelf 2</div>
<div class="t" style="left:631px;top:411px;color:#333;">MSD1-S2</div>
<div class="t" style="left:1083px;width:96px;text-align:right;top:411px;color:#333">2000000</div>
<div class="t" style="left:1188px;top:411px;color:#333;">0</div>
<div class="a" style="left:1327px;top:413px;width:14px;height:14px;border:1px solid #d4d4d4;background:#fff"></div>
<div class="a" style="left:1330px;top:416px;width:8px;height:8px;background:#b2b2b2"></div>
<div class="a" style="left:1437px;top:413px;width:14px;height:14px;border:1px solid #8a8a8a;background:#fff"></div>
<div class="a" style="left:1440px;top:416px;width:8px;height:8px;background:#222"></div>
<div class="a" style="left:476px;top:431px;width:1px;height:23px;background:#d9d9d9"></div>
<div class="a" style="left:476px;top:454px;width:1029px;height:1px;background:#d9d9d9"></div>
<div class="t" style="left:481px;top:434px;color:#333;">MSD Oven 1 Shelf 2 Bin 1</div>
<div class="t" style="left:631px;top:434px;color:#333;">MSD1-S2-B01</div>
<div class="t" style="left:1083px;width:96px;text-align:right;top:434px;color:#333">2010000</div>
<div class="t" style="left:1188px;top:434px;color:#333;">0</div>
<div class="a" style="left:1327px;top:436px;width:14px;height:14px;border:1px solid #d4d4d4;background:#fff"></div>
<div class="a" style="left:1330px;top:439px;width:8px;height:8px;background:#b2b2b2"></div>
<div class="a" style="left:1437px;top:436px;width:14px;height:14px;border:1px solid #8a8a8a;background:#fff"></div>
<div class="a" style="left:1440px;top:439px;width:8px;height:8px;background:#222"></div>
<div class="a" style="left:476px;top:454px;width:1px;height:23px;background:#d9d9d9"></div>
<div class="a" style="left:476px;top:477px;width:1029px;height:1px;background:#d9d9d9"></div>
<div class="t" style="left:481px;top:457px;color:#333;">MSD Oven 1 Shelf 2 Bin 2</div>
<div class="t" style="left:631px;top:457px;color:#333;">MSD1-S2-B02</div>
<div class="t" style="left:1083px;width:96px;text-align:right;top:457px;color:#333">2020000</div>
<div class="t" style="left:1188px;top:457px;color:#333;">0</div>
<div class="a" style="left:1327px;top:459px;width:14px;height:14px;border:1px solid #d4d4d4;background:#fff"></div>
<div class="a" style="left:1330px;top:462px;width:8px;height:8px;background:#b2b2b2"></div>
<div class="a" style="left:1437px;top:459px;width:14px;height:14px;border:1px solid #8a8a8a;background:#fff"></div>
<div class="a" style="left:1440px;top:462px;width:8px;height:8px;background:#222"></div>
<div class="a" style="left:566px;top:343px;width:1px;height:15px;background:#000"></div>
<div class="a" style="left:1349px;top:977px;width:75px;height:22px;border:1px solid #acacac;background:linear-gradient(#f0f0f0,#e5e5e5)"></div>
<svg style="left:1365px;top:981px" width="12" height="12" viewBox="0 0 12 12"><defs><linearGradient id="fg" x1="0" y1="0" x2="0" y2="1"><stop offset="0" stop-color="#5a5a5a"/><stop offset="1" stop-color="#141414"/></linearGradient></defs><rect x="0" y="0" width="12" height="12" rx="1.6" fill="url(#fg)"/><rect x="3" y="0.6" width="5.6" height="4" fill="#d4d4d4"/><rect x="6.6" y="1.2" width="1.2" height="2.4" fill="#222"/><rect x="2.8" y="6.6" width="6.4" height="4.8" fill="#fff"/><rect x="3.8" y="8.3" width="4.4" height=".8" fill="#aaa"/></svg>
<div class="t" style="left:1383px;top:979px;color:#333;">Save</div>
<div class="a" style="left:1434px;top:977px;width:75px;height:22px;border:1px solid #acacac;background:linear-gradient(#f0f0f0,#e5e5e5)"></div>
<div class="t" style="left:1454px;top:979px;color:#333;">Cancel</div>
</body></html>
